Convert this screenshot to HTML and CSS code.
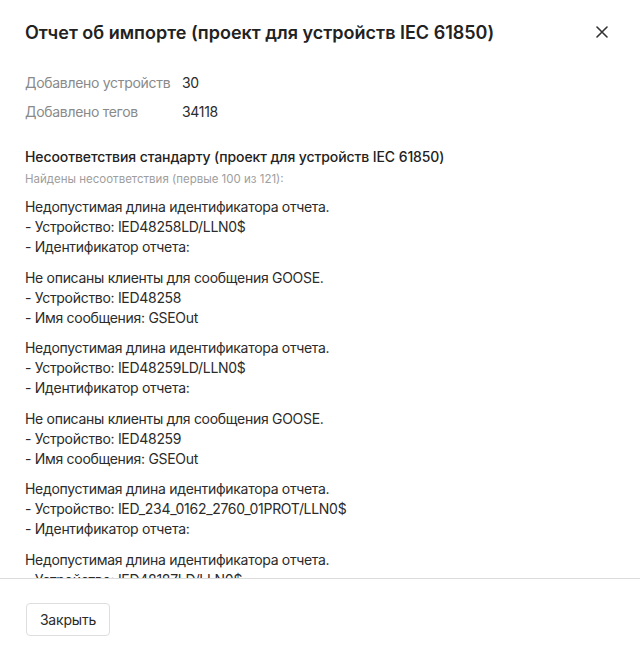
FILE: index.html
```html
<!DOCTYPE html>
<html lang="ru">
<head>
    <meta charset="UTF-8">
    <meta name="viewport" content="width=device-width, initial-scale=1.0">
    <title>Отчет об импорте</title>
    <link rel="stylesheet" href="styles.css">
</head>
<body>
    <div class="dialog">
        <div class="dialog-header">
            <h2 class="dialog-title">Отчет об импорте (проект для устройств IEC 61850)</h2>
            <button class="close-btn" aria-label="Закрыть">
                <svg width="12" height="12" viewBox="0 0 12 12">
                    <path d="M1 1 L11 11 M11 1 L1 11" stroke="#333" stroke-width="1.6" stroke-linecap="round" fill="none"/>
                </svg>
            </button>
        </div>

        <div class="dialog-body">
            <div class="stats">
                <span class="stat-label">Добавлено устройств</span>
                <span class="stat-value">30</span>
                <span class="stat-label">Добавлено тегов</span>
                <span class="stat-value">34118</span>
            </div>

            <h3 class="section-title">Несоответствия стандарту (проект для устройств IEC 61850)</h3>
            <p class="section-note">Найдены несоответствия (первые 100 из 121):</p>

            <div class="issues">
                <div class="issue">
                    <div>Недопустимая длина идентификатора отчета.</div>
                    <div>- Устройство: IED48258LD/LLN0$</div>
                    <div>- Идентификатор отчета:</div>
                </div>
                <div class="issue">
                    <div>Не описаны клиенты для сообщения GOOSE.</div>
                    <div>- Устройство: IED48258</div>
                    <div>- Имя сообщения: GSEOut</div>
                </div>
                <div class="issue">
                    <div>Недопустимая длина идентификатора отчета.</div>
                    <div>- Устройство: IED48259LD/LLN0$</div>
                    <div>- Идентификатор отчета:</div>
                </div>
                <div class="issue">
                    <div>Не описаны клиенты для сообщения GOOSE.</div>
                    <div>- Устройство: IED48259</div>
                    <div>- Имя сообщения: GSEOut</div>
                </div>
                <div class="issue">
                    <div>Недопустимая длина идентификатора отчета.</div>
                    <div>- Устройство: IED_234_0162_2760_01PROT/LLN0$</div>
                    <div>- Идентификатор отчета:</div>
                </div>
                <div class="issue">
                    <div>Недопустимая длина идентификатора отчета.</div>
                    <div>- Устройство: IED48187LD/LLN0$</div>
                    <div>- Идентификатор отчета:</div>
                </div>
            </div>
        </div>

        <div class="dialog-footer">
            <button class="btn">Закрыть</button>
        </div>
    </div>
</body>
</html>
```

FILE: styles.css
```css
* {
    margin: 0;
    padding: 0;
    box-sizing: border-box;
}

body {
    font-family: Inter, 'Noto Sans', sans-serif;
    background: #fff;
    color: #2b2b2b;
    height: 100vh;
    overflow: hidden;
}

.dialog {
    display: flex;
    flex-direction: column;
    height: 100vh;
}

.dialog-header {
    display: flex;
    align-items: center;
    justify-content: space-between;
    padding: 22px 30px 12px 25px;
}

.dialog-title {
    font-size: 18px;
    line-height: 22px;
    font-weight: 600;
    color: #222;
    letter-spacing: 0;
}

.close-btn {
    border: none;
    background: none;
    width: 16px;
    height: 16px;
    display: flex;
    align-items: center;
    justify-content: center;
    cursor: pointer;
    margin-top: -3px;
}

.dialog-body {
    flex: 1;
    overflow: hidden;
    padding: 17px 25px 0;
    font-size: 14px;
    letter-spacing: -0.3px;
}

.stats {
    display: grid;
    grid-template-columns: 157px auto;
    row-gap: 9px;
    line-height: 20px;
    margin-bottom: 25px;
}

.stat-label {
    color: #8a8a8a;
}

.stat-value {
    color: #2b2b2b;
}

.section-title {
    font-size: 14px;
    line-height: 20px;
    font-weight: 500;
    color: #222;
    letter-spacing: -0.1px;
}

.section-note {
    font-size: 11.5px;
    line-height: 16px;
    color: #9e9e9e;
    letter-spacing: 0;
    margin-top: 4px;
    margin-bottom: 10px;
}

.issue {
    line-height: 20px;
    margin-bottom: 10.6px;
}

.dialog-footer {
    border-top: 1px solid #dcdcdc;
    padding: 24px 26px 12px;
    height: 71px;
}

.btn {
    font-family: inherit;
    font-size: 14px;
    color: #2b2b2b;
    background: #fff;
    border: 1px solid #dedede;
    border-radius: 4px;
    width: 84px;
    height: 33px;
    cursor: pointer;
    letter-spacing: -0.2px;
}
```
